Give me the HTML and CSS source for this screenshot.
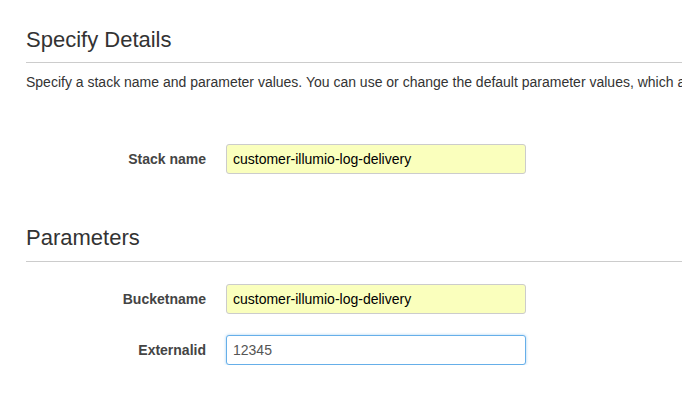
FILE: index.html
```html
<!DOCTYPE html>
<html lang="en">
<head>
    <meta charset="UTF-8">
    <meta name="viewport" content="width=device-width, initial-scale=1.0">
    <title>Specify Details</title>
    <link rel="stylesheet" href="styles.css">
</head>
<body>
    <div class="page">
        <h2 class="section-title">Specify Details</h2>
        <p class="intro">Specify a stack name and parameter values. You can use or change the default parameter values, which are defined in the AWS CloudFormation template.</p>

        <div class="form-row stack-row">
            <label class="field-label" for="stackName">Stack name</label>
            <input class="field-input autofilled" id="stackName" type="text" value="customer-illumio-log-delivery">
        </div>

        <h2 class="section-title params-title">Parameters</h2>

        <div class="form-row">
            <label class="field-label" for="bucketName">Bucketname</label>
            <input class="field-input autofilled" id="bucketName" type="text" value="customer-illumio-log-delivery">
        </div>

        <div class="form-row">
            <label class="field-label" for="externalId">Externalid</label>
            <input class="field-input focused" id="externalId" type="text" value="12345">
        </div>
    </div>
</body>
</html>
```

FILE: styles.css
```css
body {
    font-family: "Liberation Sans", Arial, sans-serif;
    margin: 0;
    padding: 0;
    background-color: #ffffff;
    color: #333;
    overflow: hidden;
}

.page {
    padding: 28px 0 0 26px;
}

.section-title {
    font-size: 22px;
    font-weight: normal;
    line-height: 24px;
    margin: 0;
    padding-bottom: 10px;
    border-bottom: 1px solid #cccccc;
    color: #333;
}

.params-title {
    margin-top: 52px;
    padding-bottom: 11px;
}

.intro {
    font-size: 14px;
    line-height: 18px;
    margin: 10px 0 0 0;
    white-space: nowrap;
    overflow: hidden;
    color: #333;
}

.form-row {
    display: grid;
    grid-template-columns: 180px 300px;
    column-gap: 20px;
    align-items: center;
    margin-top: 21px;
}

.stack-row {
    margin-top: 53px;
}

.params-title + .form-row {
    margin-top: 22px;
}

.field-label {
    text-align: right;
    font-size: 14px;
    font-weight: bold;
    color: #444;
}

.field-input {
    box-sizing: border-box;
    height: 30px;
    width: 300px;
    padding: 0 6px;
    font-family: "Liberation Sans", Arial, sans-serif;
    font-size: 14px;
    border: 1px solid #cccccc;
    border-radius: 3px;
    color: #000;
    outline: none;
}

.autofilled {
    background-color: #faffbd;
}

.focused {
    background-color: #fff;
    color: #555;
    border-color: #66afe9;
    box-shadow: 0 0 3px rgba(102, 175, 233, 0.6);
}
```
